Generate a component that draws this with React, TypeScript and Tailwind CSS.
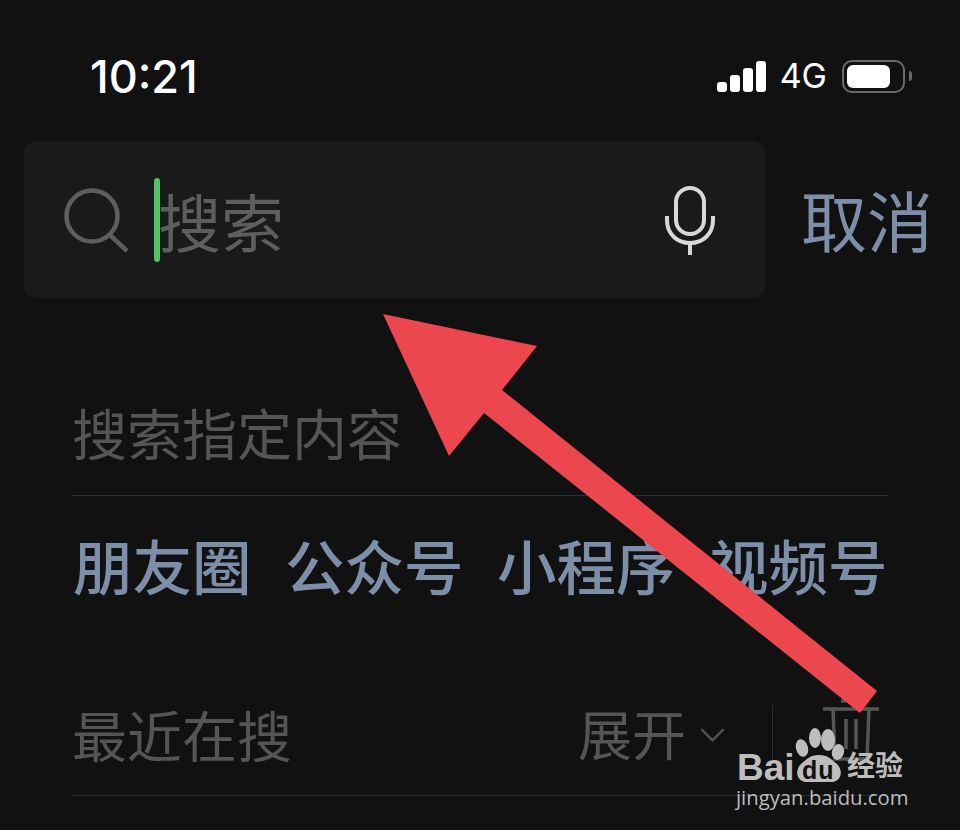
const cjk = { fontFamily: '"Noto Sans CJK SC", "Noto Sans", sans-serif' };

function StatusBar() {
  return (
    <div className="flex h-[141px] items-start justify-between pl-[90px] pr-[48px] pt-[51px]">
      <span className="text-[45px] leading-[52px] font-medium text-white" style={{ fontFamily: '"Inter", sans-serif' }}>10:21</span>
      <div className="flex items-center pt-[8px]">
        <div className="flex items-end gap-[3px]">
          <div className="h-[10px] w-[10px] rounded-[3px] bg-white" />
          <div className="h-[17px] w-[10px] rounded-[3px] bg-white" />
          <div className="h-[24px] w-[10px] rounded-[3px] bg-white" />
          <div className="h-[31px] w-[10px] rounded-[3px] bg-white" />
        </div>
        <span className="ml-[14px] text-[34px] leading-[34px] text-white" style={{ fontFamily: '"Inter", sans-serif' }}>4G</span>
        <div className="ml-[15px] flex h-[33px] w-[63px] items-center rounded-[10px] border-[2px] border-[#6a6a6a] pl-[3px]">
          <div className="h-[23px] w-[43px] rounded-[6px] bg-white" />
        </div>
        <div className="ml-[4px] h-[10px] w-[3px] rounded-r-full bg-[#6a6a6a]" />
      </div>
    </div>
  );
}

function SearchRow() {
  return (
    <div className="flex items-center pl-[24px]">
      <div className="flex h-[157px] w-[741px] items-center rounded-[12px] bg-[#1a1a1a] pl-[39px] pr-[50px]">
        <svg width="66" height="66" viewBox="0 0 66 66" fill="none" stroke="#5e5e5e" strokeWidth="4.5" className="shrink-0">
          <circle cx="29" cy="29" r="25.5" />
          <path d="M47 48 L64 64" />
        </svg>
        <div className="ml-[25px] h-[84px] w-[6px] shrink-0 rounded-full bg-[#55c267]" />
        <span className="ml-[-2px] text-[63px] leading-[80px] font-normal text-[#5e5e5e]" style={cjk}>搜索</span>
        <svg width="50" height="69" viewBox="0 0 50 69" fill="none" stroke="#d8d8d8" strokeWidth="4" className="ml-auto mt-[1px] shrink-0">
          <rect x="11" y="2" width="28" height="46" rx="14" />
          <path d="M2 30 V34 C2 48 12 57 25 57 C38 57 48 48 48 34 V30" />
          <path d="M25 57 V69" />
        </svg>
      </div>
      <span className="ml-[36px] mt-[-4px] text-[66px] leading-[80px] font-normal text-[#7d8ea8]" style={cjk}>取消</span>
    </div>
  );
}

function QuickLinks() {
  const links = ['朋友圈', '公众号', '小程序', '视频号'];
  return (
    <div className="flex h-[142px] items-center gap-[40px] pb-[7px] pl-[1px]">
      {links.map((l) => (
        <span key={l} className="w-[172px] shrink-0 text-[59.5px] leading-[72px] font-medium whitespace-nowrap text-[#7d8ea8]" style={cjk}>{l}</span>
      ))}
    </div>
  );
}

function Recent() {
  return (
    <div className="flex h-[158px] items-center justify-between border-b border-[#2c2c2c] pt-[32px]">
      <span className="text-[55px] leading-[70px] font-normal text-[#555555]" style={cjk}>最近在搜</span>
      <div className="flex items-center pr-[9px]">
        <span className="text-[54px] leading-[70px] font-normal text-[#555555]" style={cjk}>展开</span>
        <svg width="25" height="16" viewBox="0 0 26 16" fill="none" stroke="#555555" strokeWidth="2.5" className="ml-[14px] mt-[4px]">
          <path d="M1.5 2 L13 13.5 L24.5 2" />
        </svg>
        <div className="ml-[47px] h-[55px] w-px bg-[#2c2c2c]" />
        <svg width="56" height="62" viewBox="0 0 56 62" fill="none" stroke="#555555" strokeWidth="3.5" className="ml-[50px] mt-[-6px]">
          <path d="M0 10 H56 M18 2 H38 M10 10 L12 60 H44 L46 10 M23 20 V50 M33 20 V50" />
        </svg>
      </div>
    </div>
  );
}

function Arrow() {
  return (
    <svg width="960" height="830" viewBox="0 0 960 830" className="pointer-events-none absolute top-0 left-0">
      <polygon points="383,314 537,346 502,390 877,691 860,713 484,413 449,456" fill="#ec464f" />
    </svg>
  );
}

function Watermark() {
  return (
    <div className="absolute top-[728px] left-[736px] w-[180px] text-[#bdbdbd]">
      <div className="relative h-[54px]">
        <span className="absolute top-[24px] left-[1px] text-[37px] leading-[32px] font-bold" style={{ fontFamily: '"Liberation Sans", sans-serif' }}>Bai</span>
        <svg width="50" height="56" viewBox="0 0 50 56" className="absolute top-[-1px] left-[59px]" fill="#bdbdbd">
          <ellipse cx="7" cy="21" rx="6" ry="9" transform="rotate(-15 7 21)" />
          <ellipse cx="20" cy="11" rx="6" ry="10" />
          <ellipse cx="33" cy="13" rx="7" ry="11" />
          <ellipse cx="43" cy="25" rx="6" ry="8" transform="rotate(15 43 25)" />
          <path d="M24 28 C33 28 36 32 42 37 C49 44 46 55 36 55 H12 C2 55 -1 44 6 37 C12 32 15 28 24 28 Z" />
        </svg>
        <span className="absolute top-[30px] left-[66px] text-[25px] leading-[24px] font-bold tracking-[1px] text-[#111111]" style={{ fontFamily: '"Liberation Sans", sans-serif' }}>du</span>
        <span className="absolute top-[20px] left-[111px] text-[28px] leading-[32px] font-bold whitespace-nowrap" style={cjk}>经验</span>
      </div>
      <div className="mt-[2px] text-[20.3px] leading-[26px] whitespace-nowrap" style={{ fontFamily: '"Open Sans", sans-serif' }}>jingyan.baidu.com</div>
    </div>
  );
}

export default function App() {
  return (
    <div className="relative h-[830px] w-[960px] overflow-hidden bg-[#111111]">
      <StatusBar />
      <SearchRow />
      <div className="mx-[72px] mt-[102px]">
        <div className="flex h-[96px] items-center border-b border-[#2c2c2c] pb-[34px]">
          <span className="text-[55px] leading-[70px] font-normal text-[#555555]" style={cjk}>搜索指定内容</span>
        </div>
        <QuickLinks />
        <Recent />
      </div>
      <Arrow />
      <Watermark />
    </div>
  );
}
